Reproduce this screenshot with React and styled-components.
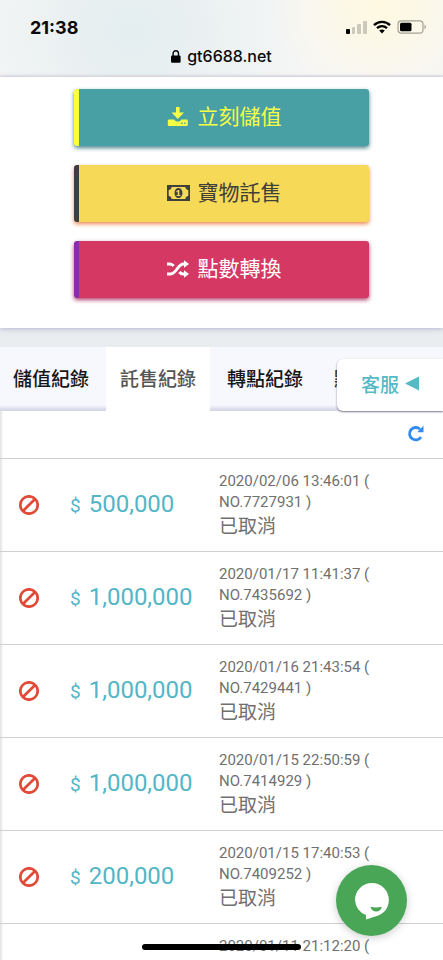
import React from "react";
import styled, { createGlobalStyle } from "styled-components";

const GlobalStyle = createGlobalStyle`
  *, *::before, *::after { box-sizing: border-box; }
  body {
    margin: 0;
    background: #e9edf0;
    font-family: Roboto, "Noto Sans CJK TC", sans-serif;
  }
  button { font-family: inherit; border: 0; cursor: pointer; }
`;

const Screen = styled.div`
  height: 100vh;
  overflow: hidden;
  display: flex;
  flex-direction: column;
`;

const BrowserBar = styled.header`
  flex: none;
  padding: 16px 16px 9px 30px;
  border-bottom: 2px solid #e6e6e6;
  background:
    radial-gradient(ellipse 110px 100px at 86% 5px, #fff9e0, #fff9e000),
    radial-gradient(ellipse 180px 160px at 30% 40%, #e3edef, #e3edef00),
    #f6f6f6;
  font-family: Inter, sans-serif;
  color: #0a0a0a;
`;

const StatusLine = styled.div`
  display: flex;
  justify-content: space-between;
  align-items: center;
  height: 22px;
`;

const Clock = styled.time`
  font-size: 18px;
  font-weight: 700;
`;

const StatusIcons = styled.div`
  display: flex;
  align-items: center;
  gap: 6px;
`;

const Address = styled.div`
  display: flex;
  justify-content: center;
  align-items: center;
  gap: 6px;
  height: 28px;
  padding: 8px 14px 0 0;
  font-size: 16px;
  line-height: 20px;
  font-weight: 500;
`;

const Actions = styled.section`
  flex: none;
  display: flex;
  flex-direction: column;
  align-items: center;
  gap: 19px;
  padding: 12px 0 30px;
  background: #fff;
  box-shadow: 0 1px 5px #b9b4d0;
`;

const ActionButton = styled.button`
  display: flex;
  justify-content: center;
  align-items: center;
  gap: 8px;
  width: 66.5%;
  height: 57px;
  padding: 0 0 1px;
  border-left: 5px solid ${(p) => p.$edge};
  border-radius: 3px;
  background: ${(p) => p.$fill};
  color: ${(p) => p.$ink};
  box-shadow: 0 2px 4px ${(p) => p.$glow};
  font-size: 21px;
  line-height: 30px;
`;

const Records = styled.main`
  flex: none;
  margin-top: 19px;
  background: #fff;
  box-shadow: inset 2px 0 2px #e6e6ea;
`;

const TabStrip = styled.div`
  position: relative;
`;

const Tabs = styled.div`
  display: flex;
  overflow: hidden;
  background: linear-gradient(#f7f8fd 58px, #d6d7e6 63px);
`;

const Tab = styled.button`
  flex: none;
  height: 64px;
  padding: 0 14px 4px;
  background: ${(p) => (p.$active ? "#fff" : "transparent")};
  color: ${(p) => (p.$active ? "#555" : "#161616")};
  font-size: 19px;
  font-weight: 500;

  &:first-child { padding-left: 13px; padding-right: 17px; }
  &:nth-child(3) { padding-left: 17px; padding-right: 17px; }
`;

const ServiceButton = styled.button`
  position: absolute;
  top: 12px;
  right: 0;
  display: flex;
  align-items: center;
  gap: 6px;
  height: 52px;
  padding: 0 23px 4px 24px;
  border-radius: 6px 0 0 6px;
  background: #fff;
  box-shadow: 0 1px 2px #77758f;
  color: #57b9c4;
  font-size: 19px;
  font-weight: 500;
`;

const Toolbar = styled.div`
  display: flex;
  justify-content: flex-end;
  align-items: center;
  height: 47px;
  padding: 0 19px 2px 0;
`;

const RefreshButton = styled.button`
  display: flex;
  padding: 0;
  background: none;
  color: #348bee;
`;

const RecordTable = styled.table`
  width: 100%;
  table-layout: fixed;
  border-collapse: collapse;
`;

const Row = styled.tr`
  border-top: 1px solid #cfcfcf;
  height: 93px;
`;

const StateCell = styled.td`
  width: 58px;
  padding: 0;
  text-align: center;
  color: #df4b38;
  svg { display: block; margin: auto; }
`;

const AmountCell = styled.td`
  width: 161px;
  padding: 0 0 0 12px;
  color: #52b6c6;
  font-size: 24px;
  line-height: 30px;
  white-space: nowrap;
`;

const Currency = styled.span`
  margin-right: 8px;
  font-size: 19px;
`;

const DetailCell = styled.td`
  padding: 2px 0 0;
  color: #707070;
  font-size: 15px;
  line-height: 21px;
`;

const Line = styled.div``;

const Result = styled.div`
  font-size: 19px;
  line-height: 28px;
`;

const ChatButton = styled.button`
  position: fixed;
  right: 36px;
  bottom: 24px;
  display: grid;
  place-items: center;
  width: 71px;
  height: 71px;
  padding: 0;
  border-radius: 50%;
  background: #4aa657;
  box-shadow: 0 2px 8px #0003;
`;

const HomeIndicator = styled.div`
  position: fixed;
  bottom: 10px;
  left: 32%;
  right: 32%;
  height: 6px;
  border-radius: 3px;
  background: #000;
`;

const SignalIcon = () => (
  <svg width="21" height="14" viewBox="0 0 21 14" aria-hidden="true">
    <rect y="9" width="4" height="5" rx="1" fill="#000" />
    <g fill="#cbc9bb">
      <rect x="6" y="7" width="3" height="7" rx="1" />
      <rect x="11" y="4" width="4" height="10" rx="1" />
      <rect x="17" y="1" width="4" height="13" rx="1" />
    </g>
  </svg>
);

const WifiIcon = () => (
  <svg width="18" height="14" viewBox="0 0 18 14" fill="none" stroke="#000" strokeWidth="2.4" aria-hidden="true">
    <path d="M1 5.2C5.5.7 12.5.7 17 5.2M4 8.2c3-2.7 7-2.7 10 0" />
    <path d="M6.2 10.6c1.7-1.4 3.9-1.4 5.6 0L9 13.5z" fill="#000" stroke="none" />
  </svg>
);

const BatteryIcon = () => (
  <svg width="30" height="14" viewBox="0 0 30 14" aria-hidden="true">
    <rect x="1" y=".8" width="25" height="12.4" rx="3.5" fill="none" stroke="#a4a296" strokeWidth="1.2" />
    <rect x="3" y="2.8" width="11.5" height="8.4" rx="1.5" />
    <path d="M27.5 4.6q3 2.4 0 4.8z" fill="#a4a296" />
  </svg>
);

const LockIcon = () => (
  <svg width="10" height="13" viewBox="0 0 10 13" aria-hidden="true">
    <rect y="5.4" width="9.6" height="7.4" rx="1.3" />
    <path d="M2.1 6V3.6a2.7 2.9 0 0 1 5.4 0V6" fill="none" stroke="#000" strokeWidth="1.4" />
  </svg>
);

const DownloadIcon = () => (
  <svg width="23" height="20" viewBox="0 0 23 20" fill="currentColor" aria-hidden="true">
    <path d="M9 0h3.600v5.500h4.400L10.800 12 4.600 5.500H9z" />
    <path fillRule="evenodd" d="M2 12.500h5l1.500 1.400q2.300 1.400 4.600 0l1.500-1.400h5q1.200 0 1.200 1.200v4q0 1.200-1.200 1.200H2Q.8 18.900.8 17.700v-4q0-1.200 1.200-1.200zM14.200 15.600V17h1.400v-1.400zm3 0V17h1.400v-1.400z" />
  </svg>
);

const MoneyIcon = () => (
  <svg width="23" height="16" viewBox="0 0 23 16" fill="currentColor" aria-hidden="true">
    <path fillRule="evenodd" d="M0 0h23v16H0zM4.600 2A3.200 3.200 0 0 1 1.700 5v6a3.200 3.200 0 0 1 2.900 3h13.800a3.200 3.200 0 0 1 2.900-3V5a3.200 3.200 0 0 1-2.900-3z" />
    <path fillRule="evenodd" d="M11.500 3c2.400 0 4 2.100 4 5s-1.600 5-4 5-4-2.100-4-5 1.600-5 4-5zM11 5 9.400 6.200v1.100l1.300-.500V10H9.500v1h4v-1h-1.200V5z" />
  </svg>
);

const ShuffleIcon = () => (
  <svg width="23" height="18" viewBox="0 0 23 18" aria-hidden="true">
    <path d="M0 4h2.700q2.300 0 4 2M0 14h3.500C9.500 14 10.500 4 16.500 4h1.500M12.400 12Q14 14 16 14h2" fill="none" stroke="currentColor" strokeWidth="3" />
    <path d="m17 .2 5 3.800-5 3.800zm0 10 5 3.800-5 3.800z" fill="currentColor" />
  </svg>
);

const TriangleIcon = () => (
  <svg width="15" height="15" viewBox="0 0 15 15" fill="currentColor" aria-hidden="true">
    <path d="M0 7.500 14 .5v14z" />
  </svg>
);

const RefreshIcon = () => (
  <svg width="17" height="17" viewBox="0 0 17 17" aria-hidden="true">
    <path d="M13 4.200A6.200 6.200 0 1 0 14 12" fill="none" stroke="currentColor" strokeWidth="2.800" />
    <path d="M16.500.8v6.400h-6.300z" fill="currentColor" />
  </svg>
);

const BanIcon = () => (
  <svg width="20" height="20" viewBox="0 0 20 20" fill="none" stroke="currentColor" strokeWidth="2.700" aria-hidden="true">
    <circle cx="10" cy="10" r="8.700" />
    <path d="M4.200 15.800 15.800 4.200" />
  </svg>
);

const ChatIcon = () => (
  <svg width="36" height="38" viewBox="0 0 36 38" aria-hidden="true">
    <path d="M18 1a17 17 0 0 1 16.800 17c0 8.500-5 13.500-11.200 15.700L12 37.500V33A16.700 16.700 0 0 1 1 18 17 17 0 0 1 18 1z" fill="#fff" />
    <path d="M16.500 24.800q5.500 1.300 11.300 0-1 4.700-5.600 4.700t-5.700-4.700z" fill="#4aa657" />
  </svg>
);

const actions = [
  { label: "立刻儲值", icon: DownloadIcon, edge: "#fcff3c", fill: "#48a0a5", ink: "#f6ff45", glow: "#48858f" },
  { label: "寶物託售", icon: MoneyIcon, edge: "#3c3f42", fill: "#f6d957", ink: "#3f3f3c", glow: "#ef8650" },
  { label: "點數轉換", icon: ShuffleIcon, edge: "#8a2da9", fill: "#d63864", ink: "#fff", glow: "#b34170" },
];

const tabs = ["儲值紀錄", "託售紀錄", "轉點紀錄", "點數紀錄"];

const records = [
  ["500,000", "2020/02/06 13:46:01", "7727931"],
  ["1,000,000", "2020/01/17 11:41:37", "7435692"],
  ["1,000,000", "2020/01/16 21:43:54", "7429441"],
  ["1,000,000", "2020/01/15 22:50:59", "7414929"],
  ["200,000", "2020/01/15 17:40:53", "7409252"],
  ["", "2020/01/11 21:12:20", ""],
];

export default function App() {
  return (
    <Screen>
      <GlobalStyle />
      <BrowserBar>
        <StatusLine>
          <Clock>21:38</Clock>
          <StatusIcons><SignalIcon /><WifiIcon /><BatteryIcon /></StatusIcons>
        </StatusLine>
        <Address><LockIcon />gt6688.net</Address>
      </BrowserBar>
      <Actions>
        {actions.map(({ label, icon: Icon, edge, fill, ink, glow }) => (
          <ActionButton key={label} $edge={edge} $fill={fill} $ink={ink} $glow={glow}>
            <Icon />{label}
          </ActionButton>
        ))}
      </Actions>
      <Records>
        <TabStrip>
          <Tabs role="tablist">
            {tabs.map((name, i) => (
              <Tab key={name} role="tab" aria-selected={i === 1} $active={i === 1}>{name}</Tab>
            ))}
          </Tabs>
          <ServiceButton>客服<TriangleIcon /></ServiceButton>
        </TabStrip>
        <Toolbar>
          <RefreshButton aria-label="重新整理"><RefreshIcon /></RefreshButton>
        </Toolbar>
        <RecordTable>
          <tbody>
            {records.map(([amount, date, number]) => (
              <Row key={date}>
                <StateCell><BanIcon /></StateCell>
                <AmountCell>{amount && <><Currency>$</Currency>{amount}</>}</AmountCell>
                <DetailCell>
                  <Line>{date} (</Line>
                  <Line>{number ? `NO.${number} )` : "\u00a0"}</Line>
                  <Result>已取消</Result>
                </DetailCell>
              </Row>
            ))}
          </tbody>
        </RecordTable>
      </Records>
      <ChatButton aria-label="線上客服"><ChatIcon /></ChatButton>
      <HomeIndicator />
    </Screen>
  );
}
